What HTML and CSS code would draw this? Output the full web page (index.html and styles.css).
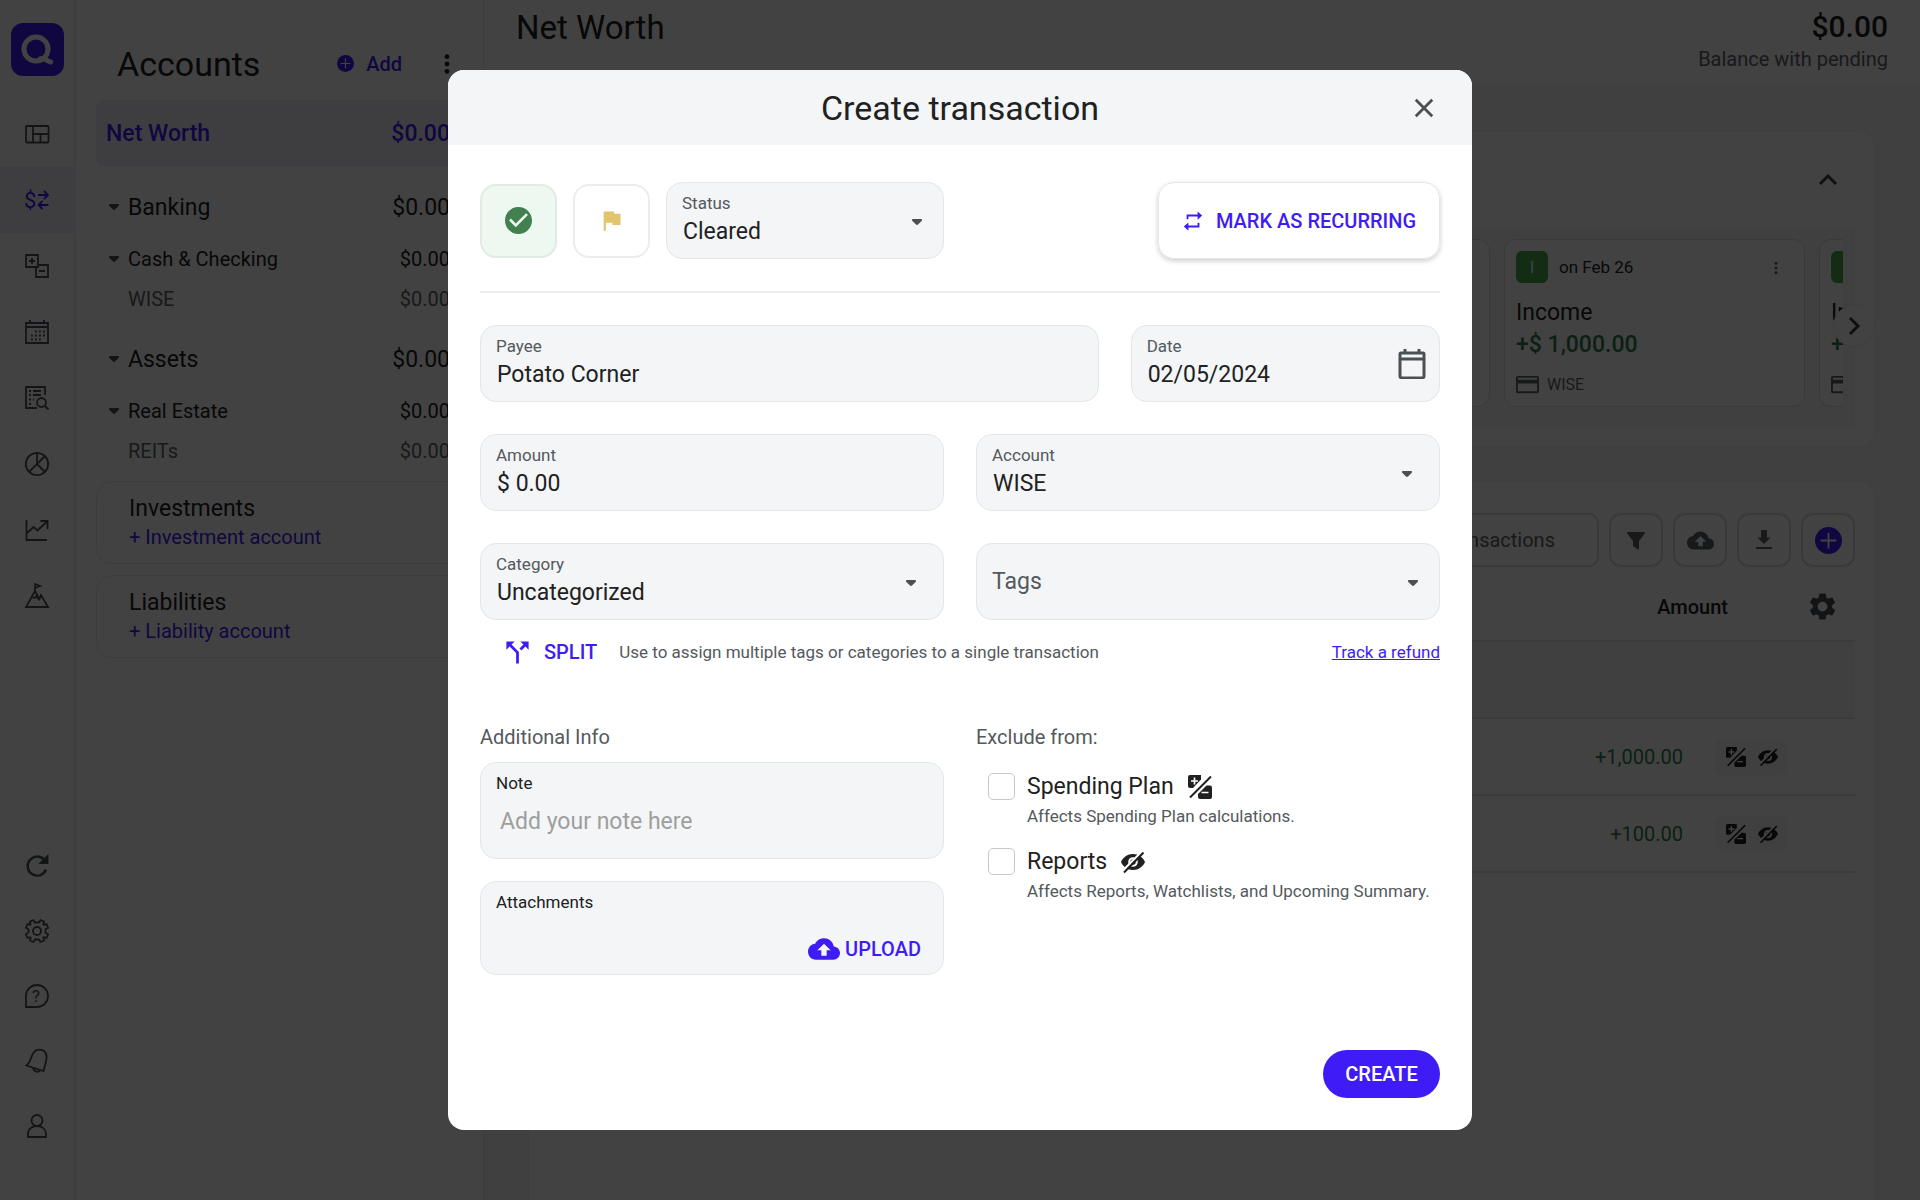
FILE: index.html
```html
<!DOCTYPE html>
<html lang="en">
<head>
  <meta charset="UTF-8" />
  <meta name="viewport" content="width=device-width, initial-scale=1.0" />
  <title>Create transaction</title>
  <link rel="stylesheet" href="styles.css">
</head>
<body>
  <!-- icon sprite -->
  <svg class="sprite" aria-hidden="true">
    <symbol id="i-caret" viewBox="0 0 12 8"><path d="M2 1h8c1 0 1.400 1 .8 1.800L7 6.500c-.6.600-1.400.600-2 0L1.200 2.800C.6 2 1 1 2 1z" fill="currentColor"/></symbol>
    <symbol id="i-dots" viewBox="0 0 24 24"><g fill="currentColor"><circle cx="12" cy="4" r="2.600"/><circle cx="12" cy="12" r="2.600"/><circle cx="12" cy="20" r="2.600"/></g></symbol>
    <symbol id="i-plus-circle" viewBox="0 0 24 24"><circle cx="12" cy="12" r="12" fill="currentColor"/><path d="M12 5v14M5 12h14" stroke="#fff" stroke-width="1.600"/></symbol>
    <symbol id="i-upload" viewBox="0 0 24 24"><path fill="currentColor" d="M19.350 10.040C18.670 6.590 15.640 4 12 4 9.110 4 6.600 5.640 5.350 8.040 2.340 8.360 0 10.910 0 14c0 3.310 2.690 6 6 6h13c2.760 0 5-2.240 5-5 0-2.640-2.050-4.780-4.650-4.960zM14 13v4h-4v-4H7l5-5 5 5h-3z"/></symbol>
    <symbol id="i-no-plan" viewBox="0 0 24 24">
      <path fill="currentColor" d="M2 0h11v4.500L5 13H2a2 2 0 0 1-2-2V2a2 2 0 0 1 2-2z"/>
      <path fill="currentColor" d="M18.500 10.500H22a2 2 0 0 1 2 2V22a2 2 0 0 1-2 2H12a2 2 0 0 1-2-2v-3z"/>
      <path d="M2 22.500 23 1.500" stroke="currentColor" stroke-width="2"/>
      <path d="M6.500 2.500v7M3 6h7M13.500 17.500h7" stroke="#fff" stroke-width="1.600"/>
    </symbol>
    <symbol id="i-no-report" viewBox="0 0 24 24">
      <path fill="currentColor" fill-rule="evenodd" d="M12 4C6.500 4 2 7.500 0 12c2 4.500 6.500 8 12 8s10-3.500 12-8c-2-4.500-6.500-8-12-8zm0 3.200a4.800 4.800 0 1 1 0 9.600 4.800 4.800 0 0 1 0-9.600z"/>
      <circle cx="12" cy="12" r="2.700" fill="currentColor"/>
      <path d="M1.500 21 20.500 2" stroke="#fff" stroke-width="2.400"/>
      <path d="M3 22.500 22.500 2.500" stroke="currentColor" stroke-width="2"/>
    </symbol>
    <symbol id="i-card" viewBox="0 0 24 24"><path fill="currentColor" d="M22 3H2a2 2 0 0 0-2 2v14a2 2 0 0 0 2 2h20a2 2 0 0 0 2-2V5a2 2 0 0 0-2-2zm0 16H2v-8h20v8zm0-12H2V5h20v2z"/></symbol>
  </svg>

  <div class="app">
    <nav class="rail" aria-label="Main">
      <a class="logo" href="#" aria-label="Home">
        <svg viewBox="0 0 53 53"><circle cx="25" cy="26" r="12" fill="none" stroke="#fff" stroke-width="5"/><path d="M29 36c4-2 7 2 10.500 3" fill="none" stroke="#fff" stroke-width="5" stroke-linecap="round"/></svg>
      </a>
      <div class="rail-top">
        <a href="#" aria-label="Dashboard"><svg viewBox="0 0 24 24"><path d="M2 4h20.500a1 1 0 0 1 1 1v14.500a1 1 0 0 1-1 1H2a1 1 0 0 1-1-1V5a1 1 0 0 1 1-1zM8 4v16.500M8 12h15.500M15.500 12v8.500"/></svg></a>
        <a href="#" class="active" aria-label="Transactions"><svg viewBox="0 0 24 24"><text x="-1" y="20" font-size="22">$</text><path d="M13 7h10M19 3l4 4-4 4M23.500 17h-10M17.500 13l-4 4 4 4"/></svg></a>
        <a href="#" aria-label="Spending plan"><svg viewBox="0 0 24 24"><path d="M1 1h12v12H1zM11 13v10h12V11H13M7 4v6M4 7h6M14 17h6"/></svg></a>
        <a href="#" aria-label="Calendar"><svg viewBox="0 0 24 24"><path d="M1 3h22v20H1zM1 7h22M5 0v3M19 0v3"/><path d="M10 11.500h10M6 15.500h14M6 19.500h10" stroke-dasharray="1.800 2.200"/></svg></a>
        <a href="#" aria-label="Reports"><svg viewBox="0 0 24 24"><path d="M20 9V1H1v21h11M8 5h8M8 9h8M19.500 19.500 23.500 23.500"/><path d="M4 5h2M4 9h2M4 13.500h5M4 18h2" stroke-dasharray="2 2"/><circle cx="16.500" cy="16.500" r="4.500"/></svg></a>
        <a href="#" aria-label="Budget"><svg viewBox="0 0 24 24"><circle cx="12" cy="12" r="11.200"/><path d="M12 1v11L4 20M12 12l8 8M12 12l8-8"/></svg></a>
        <a href="#" aria-label="Investments"><svg viewBox="0 0 24 24"><path d="M1.500 2v20H22M2 15l6.500-6 4 3.500L22 3.500M15.500 3H22.500v8"/></svg></a>
        <a href="#" aria-label="Goals"><svg viewBox="0 0 24 24"><path d="M10 7 1 23h22L16 11l-1.500 4L10 7V0l5 2-5 2M6.500 13l3 1 2-2 2.500 4"/></svg></a>
      </div>
      <div class="rail-bottom">
        <a href="#" aria-label="Refresh"><svg viewBox="0 0 24 24"><path d="M21 15.500a9.500 9.500 0 1 1-2-10" stroke-width="2.400"/><path d="M22.500 2v7h-7z" fill="currentColor"/></svg></a>
        <a href="#" aria-label="Settings"><svg viewBox="0 0 24 24"><circle cx="12" cy="12" r="4"/><path d="M9.800 3.500 8.500 1 4.800 2.600l.8 2.800-.5.500L2.500 5 .8 8.800l2.700 1.400v3.600L.8 15.200 2.500 19l2.700-.8.600.5-.9 2.800L8.600 23l1.300-2.500h4.200l1.300 2.500 3.700-1.500-.9-2.800.6-.6 2.700.9 1.700-3.800-2.700-1.400v-3.600l2.700-1.400L21.500 5l-2.700.9-.5-.6.900-2.700L15.500 1l-1.300 2.500z" stroke-linejoin="round"/></svg></a>
        <a href="#" aria-label="Help"><svg viewBox="0 0 24 24"><path d="M1 23V12a11 11 0 1 1 11 11z"/><text x="7" y="18" font-size="17">?</text></svg></a>
        <a href="#" aria-label="Notifications"><svg viewBox="0 0 24 24"><path d="M1.500 16.500c4-3 4-7 6-11s6-6 11-4c4 3 3.500 7 2.500 11-.7 3.500-1.500 6-2.500 9.500zM8 19c1 4 6 5 7 2"/></svg></a>
        <a href="#" aria-label="Profile"><svg viewBox="0 0 24 24"><circle cx="12" cy="6.500" r="5.500"/><path d="M3 23v-3c0-5 4-8 9-8s9 3 9 8v3z"/></svg></a>
      </div>
    </nav>

    <aside class="accounts">
      <header class="accounts-head">
        <h2>Accounts</h2>
        <button class="add"><svg><use href="#i-plus-circle"/></svg>Add</button>
        <button class="kebab" aria-label="Account options"><svg><use href="#i-dots"/></svg></button>
      </header>
      <div class="acc-total"><span>Net Worth</span><span>$0.00</span></div>
      <div class="acc-row group"><svg><use href="#i-caret"/></svg><span>Banking</span><span>$0.00</span></div>
      <div class="acc-row sub"><svg><use href="#i-caret"/></svg><span>Cash &amp; Checking</span><span>$0.00</span></div>
      <div class="acc-row item"><span>WISE</span><span>$0.00</span></div>
      <div class="acc-row group"><svg><use href="#i-caret"/></svg><span>Assets</span><span>$0.00</span></div>
      <div class="acc-row sub"><svg><use href="#i-caret"/></svg><span>Real Estate</span><span>$0.00</span></div>
      <div class="acc-row item"><span>REITs</span><span>$0.00</span></div>
      <div class="acc-card"><h3>Investments</h3><a href="#">+ Investment account</a></div>
      <div class="acc-card"><h3>Liabilities</h3><a href="#">+ Liability account</a></div>
    </aside>

    <main class="main">
      <header class="main-head">
        <h1>Net Worth</h1>
        <div class="balance"><strong>$0.00</strong><span>Balance with pending</span></div>
      </header>
      <section class="panel upcoming">
        <button class="collapse" aria-label="Collapse"><svg viewBox="0 0 24 24"><path d="M4 16l8-8 8 8"/></svg></button>
        <div class="strip">
          <div class="strip-cards">
            <article class="bill"></article>
            <article class="bill">
              <div class="bill-top"><span class="badge">I</span><span>on Feb 26</span><svg><use href="#i-dots"/></svg></div>
              <h3>Income</h3>
              <p class="bill-sum">+$ 1,000.00</p>
              <div class="bill-acc"><svg><use href="#i-card"/></svg>WISE</div>
            </article>
            <article class="bill">
              <div class="bill-top"><span class="badge"></span></div>
              <h3>Income</h3>
              <p class="bill-sum">+$ 1,000.00</p>
              <div class="bill-acc"><svg><use href="#i-card"/></svg></div>
            </article>
          </div>
          <button class="next" aria-label="Next"><svg viewBox="0 0 24 24"><path d="M8 4l8 8-8 8"/></svg></button>
        </div>
      </section>
      <section class="panel register">
        <div class="tools">
          <input class="search" type="text" placeholder="Search transactions" aria-label="Search transactions">
          <button aria-label="Filter"><svg viewBox="0 0 24 24"><path fill="currentColor" d="M4 4h16c1 0 1.300 1 .7 1.700L15 13v7.500c0 1-.8 1.300-1.500.800L9.600 18.500c-.4-.3-.6-.7-.6-1.200V13L3.300 5.700C2.700 5 3 4 4 4z"/></svg></button>
          <button aria-label="Upload"><svg class="wide"><use href="#i-upload"/></svg></button>
          <button aria-label="Download"><svg viewBox="0 0 24 24"><path fill="currentColor" d="M18.500 9.500H15V2H9v7.500H5.500L12 16zM4 19h16v2H4z"/></svg></button>
          <button class="tool-add" aria-label="Add transaction"><svg class="wide"><use href="#i-plus-circle"/></svg></button>
        </div>
        <table class="tx">
          <colgroup><col><col class="col-flags"><col class="col-gear"></colgroup>
          <thead>
            <tr>
              <th colspan="2">Amount</th>
              <th class="gear"><svg viewBox="2 2 20 20"><path fill="currentColor" d="M19.140 12.940c.04-.3.06-.61.06-.94 0-.32-.02-.64-.07-.94l2.030-1.580c.18-.14.23-.41.12-.61l-1.920-3.320c-.12-.22-.37-.29-.59-.22l-2.390.96c-.5-.38-1.030-.7-1.620-.94l-.36-2.540c-.04-.24-.24-.41-.48-.41h-3.840c-.24 0-.43.17-.47.41l-.36 2.540c-.59.24-1.130.57-1.620.94l-2.390-.96c-.22-.08-.47 0-.59.22L2.740 8.870c-.12.21-.08.47.12.61l2.030 1.580c-.05.3-.09.63-.09.94s.02.64.07.94l-2.030 1.580c-.18.14-.23.41-.12.61l1.920 3.320c.12.22.37.29.59.22l2.390-.96c.5.38 1.030.7 1.620.94l.36 2.540c.05.24.24.41.48.41h3.840c.24 0 .44-.17.47-.41l.36-2.540c.59-.24 1.130-.56 1.620-.94l2.390.96c.22.08.47 0 .59-.22l1.920-3.320c.12-.22.07-.47-.12-.61l-2.010-1.580zM12 15.600c-1.980 0-3.600-1.620-3.600-3.600s1.620-3.600 3.600-3.600 3.600 1.620 3.600 3.600-1.620 3.600-3.600 3.600z"/></svg></th>
            </tr>
          </thead>
          <tbody>
            <tr class="divider-row"><td colspan="3"></td></tr>
            <tr><td class="sum">+1,000.00</td><td><span class="flags"><svg><use href="#i-no-plan"/></svg><svg><use href="#i-no-report"/></svg></span></td><td></td></tr>
            <tr><td class="sum">+100.00</td><td><span class="flags"><svg><use href="#i-no-plan"/></svg><svg><use href="#i-no-report"/></svg></span></td><td></td></tr>
          </tbody>
        </table>
      </section>
    </main>
  </div>

  <div class="backdrop">
    <form class="modal" role="dialog" aria-labelledby="modal-title">
      <header class="modal-head">
        <h2 id="modal-title">Create transaction</h2>
        <button type="button" class="close" aria-label="Close"><svg viewBox="0 0 24 24"><path d="M3 3l18 18M21 3L3 21"/></svg></button>
      </header>

      <div class="modal-body">
        <div class="status-row">
          <button type="button" class="square ok" aria-label="Reviewed"><svg viewBox="2 2 20 20"><path fill="currentColor" d="M12 2C6.480 2 2 6.480 2 12s4.480 10 10 10 10-4.480 10-10S17.520 2 12 2zm-2 15l-5-5 1.410-1.410L10 14.170l7.590-7.590L19 8l-9 9z"/></svg></button>
          <button type="button" class="square flag" aria-label="Flag"><svg viewBox="0 0 24 24"><path fill="currentColor" d="M14.400 6L14 4H5v17h2v-7h5.600l.4 2h7V6z"/></svg></button>
          <div class="field status">
            <div class="field-text"><label for="status">Status</label><select id="status"><option>Cleared</option></select></div>
            <svg class="caret"><use href="#i-caret"/></svg>
          </div>
          <button type="button" class="recurring"><svg viewBox="0 0 24 24"><path fill="currentColor" d="M5 5h12V1.500L22 6l-5 4.500V7H7v3H5zM19 19H7v3.500L2 18l5-4.500V17h10v-3h2z"/></svg>MARK AS RECURRING</button>
        </div>

        <hr>

        <div class="row row-payee">
          <div class="field"><div class="field-text"><label for="payee">Payee</label><input id="payee" type="text" value="Potato Corner"></div></div>
          <div class="field">
            <div class="field-text"><label for="date">Date</label><input id="date" type="text" value="02/05/2024"></div>
            <svg class="cal" viewBox="0 0 28 30"><path d="M3 4h22a1 1 0 0 1 1 1v22a2 2 0 0 1-2 2H4a2 2 0 0 1-2-2V5a1 1 0 0 1 1-1zM2 10h24M7 0v4M21 0v4"/></svg>
          </div>
        </div>
        <div class="row">
          <div class="field"><div class="field-text"><label for="amount">Amount</label><input id="amount" type="text" value="$ 0.00"></div></div>
          <div class="field inset">
            <div class="field-text"><label for="account">Account</label><select id="account"><option>WISE</option></select></div>
            <svg class="caret"><use href="#i-caret"/></svg>
          </div>
        </div>
        <div class="row">
          <div class="field inset">
            <div class="field-text"><label for="category">Category</label><select id="category"><option>Uncategorized</option></select></div>
            <svg class="caret"><use href="#i-caret"/></svg>
          </div>
          <div class="field tags">
            <div class="field-text"><select id="tags" aria-label="Tags"><option>Tags</option></select></div>
            <svg class="caret"><use href="#i-caret"/></svg>
          </div>
        </div>

        <div class="split-row">
          <button type="button" class="split"><svg viewBox="3 3 18 18"><path fill="currentColor" d="M14 4l2.290 2.290-2.880 2.880 1.420 1.420 2.880-2.880L20 10V4zm-4 0H4v6l2.290-2.290 4.710 4.700V20h2v-8.410l-5.290-5.300z"/></svg>SPLIT</button>
          <span>Use to assign multiple tags or categories to a single transaction</span>
          <a href="#">Track a refund</a>
        </div>

        <div class="row extra">
          <div>
            <h3>Additional Info</h3>
            <div class="box">
              <label for="note">Note</label>
              <textarea id="note" placeholder="Add your note here" rows="1"></textarea>
            </div>
            <div class="box attachments">
              <span>Attachments</span>
              <button type="button" class="upload"><svg><use href="#i-upload"/></svg>UPLOAD</button>
            </div>
          </div>
          <div>
            <h3>Exclude from:</h3>
            <div class="excludes">
              <div class="exclude">
                <input type="checkbox" id="ex-plan">
                <label for="ex-plan">Spending Plan <svg><use href="#i-no-plan"/></svg></label>
                <p>Affects Spending Plan calculations.</p>
              </div>
              <div class="exclude">
                <input type="checkbox" id="ex-reports">
                <label for="ex-reports">Reports <svg><use href="#i-no-report"/></svg></label>
                <p>Affects Reports, Watchlists, and Upcoming Summary.</p>
              </div>
            </div>
          </div>
        </div>

        <footer class="modal-foot"><button type="submit" class="create">CREATE</button></footer>
      </div>
    </form>
  </div>
</body>
</html>
```

FILE: styles.css
```css
* {
  box-sizing: border-box;
}
body {
  margin: 0;
  height: 100vh;
  overflow: hidden;
  font-family: Roboto, sans-serif;
  font-size: 20px;
  color: #212121;
  background: #fff;
}
h1, h2, h3, p {
  margin: 0;
  font-weight: 400;
}
h1, h2 {
  font-size: 34px;
  line-height: 38px;
}
h1 {
  font-size: 33px;
}
a {
  color: #3f1cf5;
  text-decoration: none;
}
svg {
  display: block;
  flex-shrink: 0;
}
button, input, select, textarea {
  font-family: inherit;
  font-size: inherit;
  color: inherit;
}
button {
  display: flex;
  align-items: center;
  justify-content: center;
  border: none;
  background: none;
  padding: 0;
  cursor: pointer;
}
.sprite {
  position: absolute;
  width: 0;
  height: 0;
}

/* page behind the dialog */
.app {
  display: flex;
  height: 100vh;
}

.rail {
  width: 76px;
  border-right: 2px solid #eee;
  display: flex;
  flex-direction: column;
  padding: 23px 0 42px;
}
.logo {
  width: 53px;
  height: 53px;
  margin: 0 0 25px 11px;
  border-radius: 12px;
  background: #3f1cf5;
}
.rail-top a, .rail-bottom a {
  display: flex;
  align-items: center;
  justify-content: center;
  height: 66px;
  color: #4b5054;
}
.rail-bottom {
  margin-top: auto;
}
.rail-bottom a {
  height: 65px;
}
.rail a.active {
  background: #f0f0fa;
  color: #3f1cf5;
}
.rail-top svg, .rail-bottom svg {
  width: 24px;
  height: 24px;
  fill: none;
  stroke: currentColor;
  stroke-width: 1.8;
  overflow: visible;
}
.rail svg text {
  fill: currentColor;
  stroke: none;
}

.accounts {
  width: 408px;
  padding: 0 20px;
  border-right: 1px solid #e6e6e6;
}
.accounts-head {
  display: flex;
  align-items: center;
  height: 100px;
  padding: 27px 5px 0 21px;
}
.add {
  margin-left: auto;
  gap: 12px;
  font-weight: 500;
  color: #3f1cf5;
}
.add svg {
  width: 17px;
  height: 17px;
}
.kebab {
  margin-left: 34px;
}
.kebab svg {
  width: 22px;
  height: 22px;
}
.acc-total {
  display: flex;
  justify-content: space-between;
  align-items: center;
  height: 66px;
  padding: 0 13px 0 10px;
  border-radius: 8px;
  background: #f0f0fa;
  color: #3f1cf5;
  font-size: 23px;
  font-weight: 500;
}
.acc-row {
  display: flex;
  align-items: center;
  padding: 0 13px 0 12px;
}
.acc-row span:last-child {
  margin-left: auto;
}
.acc-row svg {
  width: 12px;
  height: 8px;
  margin-right: 8px;
  color: #4b5054;
}
.group {
  height: 62px;
  margin-top: 10px;
  font-size: 23px;
}
.sub {
  height: 42px;
}
.item {
  height: 38px;
  padding-left: 32px;
  color: #5f6368;
}
.acc-card {
  height: 83px;
  margin-top: 11px;
  padding: 13px 0 0 32px;
  border: 1px solid #e6e6ea;
  border-radius: 16px;
}
.acc-card h3 {
  font-size: 23px;
  line-height: 28px;
}
.acc-card a {
  line-height: 28px;
}

.main {
  flex: 1;
  min-width: 0;
  display: flex;
  flex-direction: column;
  background: #f5f5f5;
}
.main-head {
  display: flex;
  justify-content: space-between;
  height: 84px;
  padding: 9px 32px 0;
  background: #fff;
}
.balance {
  display: flex;
  flex-direction: column;
  align-items: flex-end;
  color: #5f6368;
}
.balance strong {
  font-size: 30px;
  line-height: 36px;
  font-weight: 500;
  color: #212121;
}
.balance span {
  line-height: 28px;
}
.panel {
  margin: 0 44px;
  border: 1px solid #eee;
  border-radius: 16px;
  background: #fff;
  padding: 0 20px;
}
.upcoming {
  margin-top: 47px;
  height: 316px;
}
.collapse {
  margin: 36px 15px 0 auto;
}
.collapse svg, .next svg {
  width: 24px;
  height: 24px;
  fill: none;
  stroke: #3a3e42;
  stroke-width: 3;
}
.strip {
  position: relative;
  margin-top: 37px;
  height: 198px;
  padding: 10px 12px;
  background: #f6f6fc;
}
.strip-cards {
  display: flex;
  justify-content: flex-end;
  gap: 14px;
  overflow: hidden;
}
.bill {
  flex: 0 0 301px;
  height: 168px;
  padding: 11px;
  border: 1px solid #ddd;
  border-radius: 12px;
  background: #fff;
}
/* last card runs off the edge of the strip */
.strip-cards .bill:last-child {
  flex-basis: 24px;
  border-right: none;
  border-radius: 12px 0 0 12px;
  overflow: hidden;
  white-space: nowrap;
}
.bill-top {
  display: flex;
  align-items: center;
  gap: 11px;
  height: 32px;
  font-size: 17px;
}
.bill-top svg {
  width: 14px;
  height: 14px;
  margin: 2px 10px 0 auto;
  color: #5f6368;
}
.badge {
  flex: 0 0 32px;
  height: 32px;
  border-radius: 6px;
  background: #4caf50;
  color: #fff;
  text-align: center;
  line-height: 32px;
}
.bill h3 {
  margin-top: 15px;
  font-size: 23px;
  line-height: 30px;
}
.bill-sum {
  font-size: 23px;
  line-height: 34px;
  font-weight: 500;
  color: #2e7d4f;
}
.bill-acc {
  display: flex;
  align-items: center;
  gap: 8px;
  margin-top: 2px;
  padding-top: 8px;
  border-top: 1px solid #f5f5f5;
  font-size: 16px;
  color: #5f6368;
}
.bill-acc svg {
  width: 23px;
  height: 23px;
}
.next {
  position: absolute;
  right: -20px;
  top: 76px;
  width: 42px;
  height: 42px;
  border: 1px solid #eee;
  border-radius: 50%;
  background: #fff;
}
.register {
  flex: 1;
  margin-top: 34px;
  padding-top: 31px;
  border-bottom: none;
  border-radius: 16px 16px 0 0;
}
.tools {
  display: flex;
  justify-content: flex-end;
  gap: 10px;
}
.search {
  width: 260px;
  height: 54px;
  padding: 0 42px 0 20px;
  border: 2px solid #dadada;
  border-radius: 10px;
  background: #fff;
}
.search::placeholder {
  color: #5f6368;
  text-align: right;
}
.tools button {
  width: 54px;
  height: 54px;
  border: 2px solid #dadada;
  border-radius: 12px;
  color: #5f6368;
}
.tools svg {
  width: 24px;
  height: 24px;
}
.tools .wide {
  width: 27px;
  height: 27px;
}
.tools .tool-add {
  color: #3f1cf5;
}
.tx {
  width: 100%;
  margin-top: 6px;
  border-collapse: collapse;
  table-layout: fixed;
}
.col-flags {
  width: 106px;
}
.col-gear {
  width: 66px;
}
.tx th, .tx td {
  padding: 0;
  border-bottom: 2px solid #e4e4e4;
}
.tx th {
  height: 68px;
  padding-right: 61px;
  text-align: right;
  font-weight: 500;
}
.tx th.gear {
  padding: 0 20px;
  color: #4b5054;
}
.gear svg {
  width: 27px;
  height: 27px;
}
.tx td {
  height: 77px;
}
.divider-row {
  background: #f5f5f5;
}
.sum {
  text-align: right;
  color: #2e7d4f;
}
.flags {
  display: flex;
  align-items: center;
  gap: 12px;
  width: 72px;
  height: 36px;
  margin-left: 32px;
  padding-left: 11px;
  border-radius: 8px;
  background: #f5f5f5;
}
.flags svg {
  width: 20px;
  height: 20px;
}

/* dialog */
.backdrop {
  position: fixed;
  inset: 0;
  display: flex;
  align-items: center;
  justify-content: center;
  background: rgba(0, 0, 0, 0.74);
}
.modal {
  width: 1024px;
  max-width: 100%;
  border-radius: 16px;
  background: #fff;
  overflow: hidden;
}
.modal-head {
  display: grid;
  grid-template-columns: 1fr auto 1fr;
  align-items: center;
  height: 75px;
  padding: 0 37px;
  background: #f3f5f7;
}
.modal-head h2 {
  grid-column: 2;
}
.close {
  justify-self: end;
}
.close svg {
  width: 22px;
  height: 22px;
  fill: none;
  stroke: #4b5054;
  stroke-width: 3;
}
.modal-body {
  padding: 37px 32px 32px;
}
.status-row {
  display: flex;
  align-items: center;
  gap: 16px;
}
.square {
  width: 77px;
  height: 74px;
  border: 2px solid #ececec;
  border-radius: 16px;
}
.square svg {
  width: 27px;
  height: 27px;
}
.ok {
  background: #ecf8f0;
  color: #43804f;
  border-color: #e0ebe4;
}
.flag {
  color: #e2c46c;
}
.recurring {
  gap: 12px;
  width: 282px;
  height: 77px;
  margin-left: auto;
  border: 1px solid #e6e6e6;
  border-radius: 16px;
  box-shadow: 0 2px 5px rgba(0, 0, 0, 0.2);
  color: #3f1cf5;
  font-weight: 500;
}
.recurring svg {
  width: 22px;
  height: 22px;
}
.field {
  display: flex;
  align-items: center;
  height: 77px;
  padding: 0 15px;
  border: 1px solid #e3e7e8;
  border-radius: 16px;
  background: #f3f5f7;
}
.status {
  width: 278px;
  padding-right: 20px;
}
.inset {
  padding-right: 26px;
}
.tags {
  padding-right: 20px;
}
.field-text {
  flex: 1;
  min-width: 0;
  display: flex;
  flex-direction: column;
}
.field label {
  font-size: 17px;
  line-height: 22px;
  color: #54595d;
}
.field input, .field select {
  width: 100%;
  height: 36px;
  padding: 0 1px;
  border: none;
  outline: none;
  background: none;
  appearance: none;
  font-size: 23px;
}
.tags select {
  padding: 0;
  color: #54595d;
}
.caret {
  width: 12px;
  height: 8px;
  margin-top: 2px;
  color: #4b5054;
}
.cal {
  width: 28px;
  height: 30px;
  margin-right: -2px;
  fill: none;
  stroke: #4b5054;
  stroke-width: 3;
}
hr {
  margin: 32px 0;
  border: none;
  border-top: 2px solid #ececec;
}
.row {
  display: grid;
  grid-template-columns: 1fr 1fr;
  gap: 32px;
  margin-top: 32px;
}
.row-payee {
  grid-template-columns: 2fr 1fr;
}
.split-row {
  display: flex;
  align-items: center;
  height: 40px;
  margin-top: 12px;
  font-size: 17px;
  color: #54595d;
}
.split {
  gap: 14px;
  margin: 0 22px 0 25px;
  font-size: 20px;
  font-weight: 500;
  color: #3f1cf5;
}
.split svg {
  width: 25px;
  height: 25px;
}
.split-row a {
  margin-left: auto;
  text-decoration: underline;
}
.extra {
  margin-top: 53px;
}
.extra h3 {
  font-size: 20px;
  line-height: 24px;
  color: #54595d;
  margin-bottom: 13px;
}
.box {
  display: flex;
  flex-direction: column;
  height: 97px;
  padding: 8px 15px;
  border: 1px solid #e3e7e8;
  border-radius: 16px;
  background: #f3f5f7;
  font-size: 17px;
  line-height: 24px;
}
.box textarea {
  height: 42px;
  margin-top: 8px;
  padding: 4px;
  border: none;
  outline: none;
  resize: none;
  background: none;
  font-size: 23px;
  line-height: 30px;
}
.box textarea::placeholder {
  color: #9e9e9e;
}
.attachments {
  height: 94px;
  margin-top: 22px;
}
.upload {
  align-self: flex-end;
  gap: 5px;
  margin: auto 7px 1px 0;
  font-size: 20px;
  font-weight: 500;
  color: #3f1cf5;
}
.upload svg {
  width: 32px;
  height: 32px;
}
.excludes {
  display: grid;
  gap: 16px;
  padding: 7px 0 0 12px;
}
.exclude {
  display: grid;
  grid-template-columns: 27px 1fr;
  align-items: center;
  column-gap: 12px;
}
.exclude input {
  appearance: none;
  width: 27px;
  height: 27px;
  margin: 0;
  border: 1px solid #c8c8c8;
  border-radius: 5px;
  background: #fff;
}
.exclude label {
  display: flex;
  align-items: center;
  gap: 14px;
  height: 35px;
  font-size: 23px;
}
.exclude label svg {
  width: 24px;
  height: 24px;
}
.exclude p {
  grid-column: 2;
  font-size: 17px;
  line-height: 24px;
  color: #54595d;
}
.modal-foot {
  display: flex;
  justify-content: flex-end;
  margin-top: 75px;
}
.create {
  width: 117px;
  height: 48px;
  border-radius: 24px;
  background: #3f1cf5;
  color: #fff;
  font-weight: 500;
}
```
